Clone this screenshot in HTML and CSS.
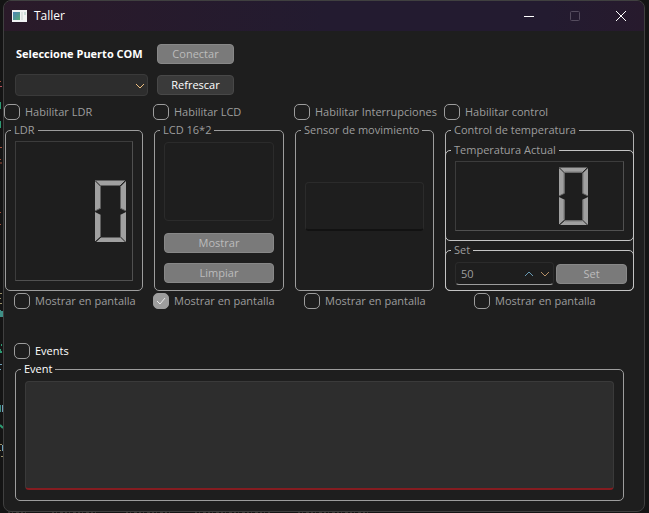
FILE: index.html
```html
<!DOCTYPE html>
<html lang="es">
<head>
<meta charset="utf-8">
<title>Taller</title>
<link rel="stylesheet" href="styles.css">
</head>
<body>
<svg class="backdrop left" viewBox="0 0 3 400" aria-hidden="true">
  <path stroke="#a5503c" d="M0 21.500h1M0 87.500h2M0 99.500h1M0 103h2M0 152.500h1M0 164.500h1"/>
  <path stroke="#b5505c" d="M0 26.500h2"/>
  <path stroke="#2d9a72" stroke-width="2" d="M0 42v7M0 61v7M1 285h1M0 289v4M1 292h1M0 365l3 3"/>
  <path stroke="#9a8f68" d="M0 233.500h2M0 238.500h1M0 243.500h2M0 384.500h2M0 390.500h1M1 396.500h2"/>
  <path stroke="#3f8f86" stroke-width="2" d="M0 250v7M2 251v6M0 345v7"/>
  <path stroke="#6fa0b8" d="M0 304.500h2M0 309.500h1M2.500 345v7M2.500 385v6"/>
</svg>
<svg class="backdrop bottom" viewBox="0 0 400 2" aria-hidden="true">
  <path stroke="#55554f" stroke-dasharray="2 2 1 3 3 2" d="M8 1h18M52 1h47M126 1h44M195 1h75M298 1h73"/>
</svg>
<main class="window">
  <header class="titlebar">
    <svg class="app-icon" viewBox="0 0 15 12" aria-hidden="true">
      <defs><linearGradient id="pane" x2="1" y2="1"><stop stop-color="#4c83b5"/><stop offset="1" stop-color="#58a97a"/></linearGradient></defs>
      <path fill="#f1f3f4" d="M0 0h15v12H0z"/><path fill="url(#pane)" d="M1 2h7v8H1z"/><path fill="#dce3e2" d="M9 2h2v8H9z"/><path fill="#c9ddd9" d="M12 2h2v3h-2z"/>
    </svg>
    <h1 class="title">Taller</h1>
    <div class="controls">
      <button class="control" aria-label="Minimizar"><svg viewBox="0 0 12 12"><path d="M1 6.500h10"/></svg></button>
      <button class="control dim" aria-label="Maximizar" disabled><svg viewBox="0 0 12 12"><rect x="1.500" y="1.500" width="9" height="9" rx="1"/></svg></button>
      <button class="control" aria-label="Cerrar"><svg viewBox="0 0 12 12"><path d="M1 1l10 10M11 1L1 11"/></svg></button>
    </div>
  </header>

  <section class="connection">
    <label class="port-label" for="port">Seleccione Puerto COM</label>
    <button class="button" disabled>Conectar</button>
    <span class="select-wrap">
      <select id="port"><option></option></select>
      <svg class="chevron" viewBox="0 0 10 6"><path d="M1 1l4 4 4-4"/></svg>
    </span>
    <button class="button active">Refrescar</button>
  </section>

  <section class="modules">
    <div class="module">
      <label class="check"><input type="checkbox" disabled>Habilitar LDR</label>
      <fieldset class="group">
        <legend>LDR</legend>
        <div class="display">
          <svg class="digit" viewBox="0 0 31 63" role="img" aria-label="0"><use href="#zero"/></svg>
        </div>
      </fieldset>
      <label class="check indent"><input type="checkbox" disabled>Mostrar en pantalla</label>
    </div>

    <div class="module">
      <label class="check"><input type="checkbox" disabled>Habilitar LCD</label>
      <fieldset class="group">
        <legend>LCD 16*2</legend>
        <div class="stack">
          <textarea class="lcd-text" aria-label="Texto LCD" disabled></textarea>
          <button class="button" disabled>Mostrar</button>
          <button class="button" disabled>Limpiar</button>
        </div>
      </fieldset>
      <label class="check"><input type="checkbox" checked disabled>Mostrar en pantalla</label>
    </div>

    <div class="module">
      <label class="check"><input type="checkbox" disabled>Habilitar Interrupciones</label>
      <fieldset class="group">
        <legend>Sensor de movimiento</legend>
        <div class="sensor"><textarea class="sensor-text" aria-label="Sensor" disabled></textarea></div>
      </fieldset>
      <label class="check indent"><input type="checkbox" disabled>Mostrar en pantalla</label>
    </div>

    <div class="module">
      <label class="check"><input type="checkbox" disabled>Habilitar control</label>
      <fieldset class="group nested">
        <legend>Control de temperatura</legend>
        <fieldset class="group inner current">
          <legend>Temperatura Actual</legend>
          <div class="display temperature">
            <svg class="digit" viewBox="0 0 31 63" role="img" aria-label="0"><use href="#zero"/></svg>
          </div>
        </fieldset>
        <fieldset class="group inner target">
          <legend>Set</legend>
          <div class="set-row">
            <span class="spin">
              <input type="text" inputmode="numeric" value="50" aria-label="Temperatura" disabled>
              <svg class="chevron up" viewBox="0 0 10 6"><path d="M1 5l4-4 4 4"/></svg>
              <svg class="chevron" viewBox="0 0 10 6"><path d="M1 1l4 4 4-4"/></svg>
            </span>
            <button class="button" disabled>Set</button>
          </div>
        </fieldset>
      </fieldset>
      <label class="check center"><input type="checkbox" disabled>Mostrar en pantalla</label>
    </div>
  </section>

  <section class="events">
    <label class="check bright"><input type="checkbox">Events</label>
    <fieldset class="group bright">
      <legend>Event</legend>
      <textarea class="event-log" aria-label="Event"></textarea>
    </fieldset>
  </section>
</main>

<svg class="symbols" aria-hidden="true">
  <symbol id="zero" viewBox="0 0 31 63">
    <path fill="#a0a0a0" d="M1 1h29l-5 5H6zM0 1l6 6v21l-6 3zM31 1l-6 6v21l6 3zM0 32l6 3v21l-6 6zM31 32l-6 3v21l6 6zM6 57h19l5 5H1z"/>
    <path fill="none" stroke="#606060" d="M0 .5h31M5.500 6v22M25.500 6v22M5.500 35v21M25.500 35v21M6 5.500h19M6 57.500h19M0 0l6 6M25 57l5 5M0 31l6-3M31 31l-6-3"/>
    <path fill="none" stroke="#202020" d="M31 0l-6 6M6 57l-6 5"/>
  </symbol>
</svg>
</body>
</html>
```
FILE: styles.css
```css
* { box-sizing: border-box; }

body {
  margin: 0;
  min-height: 100vh;
  padding: 0 4px 1px 3px;
  display: grid;
  background: #141414;
  color: #9d9d9d;
  font: 11px/16px "Open Sans", "Noto Sans", sans-serif;
  overflow: hidden;
}

button, input, select, textarea { font: inherit; color: inherit; margin: 0; }

.backdrop { position: absolute; fill: none; }
.backdrop.left { left: 0; top: 60px; width: 3px; height: 400px; }
.backdrop.bottom { left: 0; bottom: 0; width: 400px; height: 2px; }

.window {
  position: relative;
  display: flex;
  flex-direction: column;
  background: #1e1e1e;
  border: 1px solid #404040;
  border-radius: 8px;
  overflow: hidden;
}

.titlebar {
  display: flex;
  align-items: center;
  height: 30px;
  padding-left: 8px;
  background: linear-gradient(90deg, #2a1a29, #231b30 50%, #231b30 85%, #271a2d);
  color: #fff;
}
.app-icon { width: 15px; height: 12px; }
.title { margin: 0 auto 0 7px; font-size: 12px; font-weight: 400; }
.controls { display: flex; }
.control { width: 46px; height: 30px; padding: 0; border: 0; background: none; display: grid; place-items: center; }
.control svg { width: 12px; height: 12px; fill: none; stroke: #fff; }
.control.dim svg { stroke: #554c5e; }

.connection {
  display: grid;
  grid-template-columns: 133px 77px;
  grid-auto-rows: 22px;
  align-items: center;
  gap: 9px;
  padding: 12px 11px 6px;
}
.port-label { padding-left: 1px; color: #fff; font-weight: 700; white-space: nowrap; }

.button {
  height: 20px;
  padding: 0;
  border: 1px solid #888;
  border-radius: 4px;
  background: #7a7a7a;
  color: #bcbcbc;
  line-height: 16px;
}
.button.active { background: #3a3a3a; border-color: #484848; color: #fff; }

.select-wrap { position: relative; display: flex; }
select {
  appearance: none;
  width: 100%;
  height: 22px;
  border: 1px solid #3a3a3a;
  border-radius: 4px;
  background: #2d2d2d;
}
.chevron { flex: none; width: 10px; height: 6px; fill: none; stroke: #b58f66; overflow: visible; }
.chevron.up { stroke: #6699b3; }
.select-wrap .chevron { position: absolute; right: 3px; top: 9px; stroke: #f0c080; }

.modules {
  display: grid;
  grid-template-columns: 138fr 130fr 139fr 189fr;
  gap: 11px;
  padding: 0 10px 0 1px;
}
.module { display: flex; flex-direction: column; min-width: 0; }

.check { display: flex; align-items: center; gap: 5px; height: 20px; margin-left: -1px; white-space: nowrap; }
.check.indent { padding-left: 10px; }
.check.center { padding-left: 30px; }
.check input {
  appearance: none;
  flex: none;
  width: 16px;
  height: 16px;
  border: 1px solid #9d9d9d;
  border-radius: 5px;
}
.check input:checked {
  background: #9d9d9d url("data:image/svg+xml,%3Csvg xmlns='http://www.w3.org/2000/svg' viewBox='0 0 14 14'%3E%3Cpath d='M3 7l3 3 5-6' fill='none' stroke='%23e8e8e8'/%3E%3C/svg%3E") center / 14px no-repeat;
}
.bright { color: #fff; }

.group {
  min-width: 0;
  height: 169px;
  margin: 0;
  padding: 3px 9px 9px;
  border: 1px solid #9d9d9d;
  border-radius: 5px;
}
.group legend { margin-left: -4px; padding: 0 3px; line-height: 16px; white-space: nowrap; }

.display {
  display: flex;
  align-items: center;
  justify-content: flex-end;
  height: 140px;
  padding-right: 6px;
  border: 1px solid #3c3c3c;
  border-right-color: #505050;
  border-bottom-color: #505050;
}
.digit { width: 31px; height: 63px; }
.display.temperature { height: 70px; padding-right: 35px; }
.temperature .digit { width: 29px; height: 59px; }

.stack { display: flex; flex-direction: column; gap: 10px; padding-top: 1px; }
.lcd-text { height: 79px; margin-bottom: 2px; border: 1px solid #2b2b2b; border-radius: 4px; background: none; resize: none; }

.sensor { display: grid; align-content: center; height: 140px; padding-bottom: 10px; }
.sensor-text { width: 100%; height: 49px; border: 1px solid #2b2b2b; border-bottom: 2px solid #121212; border-radius: 4px; background: none; resize: none; }

.group.nested { padding: 0; border-color: #b0b0b0; }
.nested > legend { margin-left: 5px; }
.group.inner { margin: 0 -1px; border-color: #c4c4c4; }
.inner > legend { margin-left: -4px; }
.group.current { height: 99px; margin-top: 4px; margin-bottom: 1px; }
.group.target { height: 49px; padding: 4px 6px 0 9px; }
.set-row { display: grid; grid-template-columns: minmax(0, 99fr) minmax(0, 71fr); gap: 2px; align-items: center; }
.spin { display: flex; align-items: center; gap: 6px; min-width: 0; height: 23px; padding: 0 3px 0 5px; border: 1px solid #2b2b2b; border-bottom-color: #9d9d9d; border-radius: 4px; }
.spin input { flex: 1; width: 0; min-width: 0; padding: 0; border: 0; background: none; }

.events { padding: 30px 20px 10px 11px; flex: 1; display: flex; flex-direction: column; }
.events .group { flex: 1; height: auto; padding-top: 4px; }
.event-log { display: block; width: 100%; height: 109px; border: 1px solid #3a3a3a; border-bottom: 2px solid #851c20; border-radius: 4px; background: #2d2d2d; resize: none; }

.symbols { position: absolute; width: 0; height: 0; }
```
